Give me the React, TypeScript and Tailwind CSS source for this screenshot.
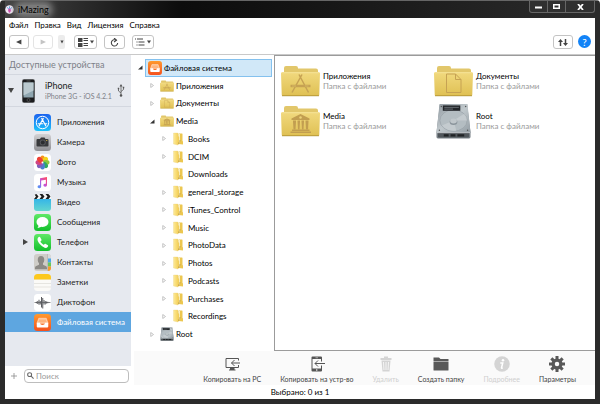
import React, { useState } from 'react';

type IconProps = { className?: string };

interface TreeNode {
  label: string;
  level: number;
  icon: React.FC<IconProps>;
  state: 'open' | 'closed' | 'leaf';
}

// ---- Sidebar icons ----

const AppStoreIcon = ({ className }: IconProps) => (
  <svg viewBox="0 0 34 34" className={className}>
    <defs>
      <linearGradient id="appstore" x1="0" y1="0" x2="0" y2="1">
        <stop offset="0" stopColor="#1c62ee" />
        <stop offset="1" stopColor="#1cc3fb" />
      </linearGradient>
    </defs>
    <rect width="34" height="34" rx="7" fill="url(#appstore)" />
    <circle cx="17" cy="17" r="12.5" fill="none" stroke="#fff" strokeWidth="2" />
    <path d="M18.5 9 10.5 23.5M15.5 9l8 14.5M8.5 19.5h9M21 19.5h4.5" stroke="#fff" strokeWidth="2.4" strokeLinecap="round" />
  </svg>
);

const CameraIcon = ({ className }: IconProps) => (
  <svg viewBox="0 0 34 34" className={className}>
    <defs>
      <linearGradient id="camera" x1="0" y1="0" x2="0" y2="1">
        <stop offset="0" stopColor="#d2d2d4" />
        <stop offset="1" stopColor="#8e8e93" />
      </linearGradient>
    </defs>
    <rect width="34" height="34" rx="7" fill="url(#camera)" />
    <path d="M7 10h5l2-3h7l2 3h4a2 2 0 0 1 2 2v11a2 2 0 0 1-2 2H7a2 2 0 0 1-2-2V12a2 2 0 0 1 2-2z" fill="#37383b" />
    <circle cx="17.5" cy="17" r="6" fill="#55565a" />
    <circle cx="17.5" cy="17" r="4" fill="#2b2c2f" />
    <circle cx="25.5" cy="13" r="1.2" fill="#e8c547" />
  </svg>
);

const PETALS = ['#f7941d', '#f2d21b', '#8fc73e', '#2fa865', '#4a80cf', '#7f5fbb', '#cf4585', '#ee4036'];

const PhotosIcon = ({ className }: IconProps) => (
  <svg viewBox="0 0 34 34" className={className}>
    <rect width="34" height="34" rx="7" fill="#fff" />
    {PETALS.map((color, i) => (
      <ellipse key={color} cx="17" cy="10" rx="4.8" ry="7" fill={color} transform={`rotate(${i * 45} 17 17)`} />
    ))}
    <circle cx="17" cy="17" r="2" fill="#fff" />
  </svg>
);

const MusicIcon = ({ className }: IconProps) => (
  <svg viewBox="0 0 34 34" className={className}>
    <defs>
      <linearGradient id="music" x1="1" y1="0" x2="0" y2="1">
        <stop offset="0.1" stopColor="#fb4c6b" />
        <stop offset="0.5" stopColor="#c452d8" />
        <stop offset="1" stopColor="#3aa0fb" />
      </linearGradient>
    </defs>
    <rect width="34" height="34" rx="7" fill="#fff" />
    <path d="M12 8.500 26 6v16.500a3.600 3 0 1 1-2.300-2.900V11.500L14.300 13v12.500a3.600 3 0 1 1-2.300-2.900z" fill="url(#music)" />
  </svg>
);

const VideoIcon = ({ className }: IconProps) => (
  <svg viewBox="0 0 34 34" className={className}>
    <defs>
      <linearGradient id="video" x1="0" y1="0" x2="0" y2="1">
        <stop offset="0" stopColor="#35b5e8" />
        <stop offset="1" stopColor="#63d6cf" />
      </linearGradient>
      <clipPath id="videoClip">
        <rect width="34" height="34" rx="6" />
      </clipPath>
    </defs>
    <g clipPath="url(#videoClip)">
      <rect width="34" height="10" fill="#f5f5f5" />
      <path d="M0 0h5l4 5-4 5H0l4-5zM11 0h6l4 5-4 5h-6l4-5zM23 0h6l4 5-4 5h-6l4-5z" fill="#1e1e1e" />
      <rect y="10" width="34" height="24" fill="url(#video)" />
    </g>
  </svg>
);

const MessagesIcon = ({ className }: IconProps) => (
  <svg viewBox="0 0 34 34" className={className}>
    <defs>
      <linearGradient id="green" x1="0" y1="0" x2="0" y2="1">
        <stop offset="0" stopColor="#5fe866" />
        <stop offset="1" stopColor="#12c02c" />
      </linearGradient>
    </defs>
    <rect width="34" height="34" rx="7" fill="url(#green)" />
    <ellipse cx="17" cy="16" rx="12" ry="10" fill="#fff" />
    <path d="M9 21c.5 3-.5 5-2.500 6.500 4 .2 7-1 8.500-3z" fill="#fff" />
  </svg>
);

const PhoneIcon = ({ className }: IconProps) => (
  <svg viewBox="0 0 34 34" className={className}>
    <rect width="34" height="34" rx="7" fill="url(#green)" />
    <path
      d="M8 7.500c2-2.500 3.500-2.300 4.600-.5l2.200 3.800c.8 1.500-.3 2.600-1.700 3.700-.6.600 0 1.800 2.200 4.200 2.300 2.300 3.800 3.300 4.500 2.700 1.200-1.300 2.300-2.400 3.700-1.500l3.700 2.300c1.600 1.100 1.800 2.400-.5 4.500-2.700 2.400-7.800.9-13.200-4.500S5.500 10.700 8 7.500z"
      fill="#fff"
    />
  </svg>
);

const ContactsIcon = ({ className }: IconProps) => (
  <svg viewBox="0 0 34 34" className={className}>
    <defs>
      <clipPath id="contactsClip">
        <rect width="34" height="34" rx="6" />
      </clipPath>
    </defs>
    <g clipPath="url(#contactsClip)">
      <rect width="34" height="34" fill="#cfcdc8" />
      <path d="M14 4c4.500 0 6.500 3 6.500 7.500 0 3-1 5.500-2.500 7v3l6.500 3c1.500 1 1.500 3 1.500 6H2c0-3 0-5 1.500-6l6.500-3v-3c-1.500-1.500-2.500-4-2.500-7C7.500 7 9.500 4 14 4z" fill="#8c8a86" />
      <rect x="27" width="1" height="34" fill="#aaa" />
      <rect x="28" width="6" height="10" fill="#d9d9d9" />
      <rect x="28" y="9" width="6" height="8" fill="#4aa8e8" />
      <rect x="28" y="17" width="6" height="8" fill="#67c95a" />
      <rect x="28" y="25" width="6" height="9" fill="#f59a2f" />
    </g>
  </svg>
);

const NotesIcon = ({ className }: IconProps) => (
  <svg viewBox="0 0 34 34" className={className}>
    <path d="M0 11h34v16a7 7 0 0 1-7 7H7a7 7 0 0 1-7-7z" fill="#fbfaf7" />
    <path d="M7 0h20a7 7 0 0 1 7 7v4H0V7a7 7 0 0 1 7-7z" fill="#fcc81e" />
    <path d="M0 19h34M0 26h34" stroke="#d8d6d0" strokeWidth="1.2" />
  </svg>
);

const VoiceIcon = ({ className }: IconProps) => (
  <svg viewBox="0 0 34 34" className={className}>
    <rect width="34" height="34" rx="7" fill="#fff" />
    <path d="M1 17h32" stroke="#66676b" strokeWidth="1.6" />
    <path
      d="M5 15.500v3M7.500 14v6M10 11.500v10M12.500 14v7M15 6v21M17.500 8v21M20 12v9M22.500 14v7M25 15v4M27.500 15.500v3"
      stroke="#5b5c60"
      strokeWidth="2"
    />
  </svg>
);

const FileSystemIcon = ({ className }: IconProps) => (
  <svg viewBox="0 0 34 34" className={className}>
    <defs>
      <linearGradient id="filesystem" x1="0" y1="0" x2="0" y2="1">
        <stop offset="0" stopColor="#ff9a2e" />
        <stop offset="1" stopColor="#f4511e" />
      </linearGradient>
    </defs>
    <rect width="34" height="34" rx="7" fill="url(#filesystem)" />
    <path d="M9.500 8.500h15l3.500 10H6z" fill="#ffc79a" stroke="#ffe3cc" strokeWidth="1.2" />
    <path d="M10 12.500h14M9 15.500h16" stroke="#f9904d" strokeWidth="1" />
    <path d="M5.500 17.500H12c.5 3 2 4.500 5 4.500s4.500-1.500 5-4.500h6.500V25a2 2 0 0 1-2 2h-19a2 2 0 0 1-2-2z" fill="#fff" />
  </svg>
);

// ---- Folder / disk icons ----

const FolderBase = ({ className, children }: IconProps & { children?: React.ReactNode }) => (
  <svg viewBox="0 0 78 62" className={className}>
    <defs>
      <linearGradient id="folder" x1="0" y1="0" x2="0" y2="1">
        <stop offset="0" stopColor="#f1d97e" />
        <stop offset="1" stopColor="#dfc053" />
      </linearGradient>
    </defs>
    <path d="M2 14h4V5a4 4 0 0 1 4-4h20a4 4 0 0 1 4 4v1h36a4 4 0 0 1 4 4v8H2z" fill="#e2c76b" />
    <path d="M0 16a3 3 0 0 1 3-3h72a3 3 0 0 1 3 3l-1.500 43a2 2 0 0 1-2 2h-71a2 2 0 0 1-2-2z" fill="url(#folder)" />
    <path d="M2 14.500h74" stroke="#f6e5a2" strokeWidth="1.5" />
    <path d="M2 60.500h74" stroke="#a88a2e" strokeWidth="1.5" />
    {children}
  </svg>
);

const AppsFolder = ({ className }: IconProps) => (
  <FolderBase className={className}>
    <g fill="none" stroke="#c6a253">
      <path d="M42 18 22 54M36 18l19 36" strokeWidth="3" />
      <path d="M19 41h40" strokeWidth="5" />
    </g>
    <path d="M22 41h8M48 41h7" stroke="#dcc06a" strokeWidth="1.5" />
  </FolderBase>
);

const DocsFolder = ({ className }: IconProps) => (
  <FolderBase className={className}>
    <path d="M25 17h18l11 11v26H25zM43 17v11h11" fill="none" stroke="#c6a253" strokeWidth="2" />
  </FolderBase>
);

const MediaFolder = ({ className }: IconProps) => (
  <FolderBase className={className}>
    <g fill="#c29e50">
      <path d="M39 17 57 26v3H21v-3z" />
      <path d="M24 30h6v2l-1 16h-4l-1-16zM33 30h5v2l-1 16h-3l-1-16zM41 30h5v2l-1 16h-3l-1-16zM49 30h6v2l-1 16h-4l-1-16z" />
      <path d="M22 48h35v3H22zM19 52h41v3H19z" />
    </g>
    <circle cx="39" cy="24" r="2.5" fill="#ecd279" />
  </FolderBase>
);

const PlainFolder = ({ className }: IconProps) => (
  <svg viewBox="0 0 28 28" className={className}>
    <defs>
      <linearGradient id="plain" x1="0" y1="0" x2="1" y2="0">
        <stop offset="0" stopColor="#fdea98" />
        <stop offset="1" stopColor="#f2cb50" />
      </linearGradient>
    </defs>
    <path d="M13 3h7a1 1 0 0 1 1 1v14l1 1v6l-9-1z" fill="#ecc750" />
    <path d="M14 4h2v17h-2z" fill="#fbf0bf" />
    <path d="M3 2h8a1 1 0 0 1 1 1v5l2 2v13l-2 3-9-2z" fill="url(#plain)" stroke="#e8cb72" strokeWidth="0.6" />
    <path d="M13 24c0-4 3-3 3-8" fill="none" stroke="#b3954a" strokeWidth="1.4" />
  </svg>
);

const DiskIcon = ({ className }: IconProps) => (
  <svg viewBox="0 0 72 74" className={className}>
    <defs>
      <linearGradient id="disk" x1="0" y1="0" x2="1" y2="1">
        <stop offset="0" stopColor="#929ba2" />
        <stop offset="0.5" stopColor="#c0c8cc" />
        <stop offset="1" stopColor="#949ea5" />
      </linearGradient>
    </defs>
    <path d="M8 2h56l7 58v10a3 3 0 0 1-3 3H4a3 3 0 0 1-3-3V60z" fill="#777f85" />
    <path d="M9 2h54a2 2 0 0 1 2 2l6 57H1L7 4a2 2 0 0 1 2-2z" fill="url(#disk)" />
    <ellipse cx="36" cy="36" rx="28" ry="22" fill="#b4bdc2" stroke="#9aa3a9" strokeWidth="1.5" />
    <path d="M36 36 12 46a28 22 0 0 0 30 11zM36 36l22-14a28 22 0 0 1 6 14z" fill="#d3d9dc" opacity="0.5" />
    <ellipse cx="36" cy="39" rx="8" ry="6" fill="#8a949b" />
    <ellipse cx="36" cy="37" rx="7" ry="5" fill="#c0c7cb" />
    <rect x="14" y="5" width="36" height="11" fill="#23262a" />
    <path d="M17 9h30M17 12.500h18" stroke="#7e858a" strokeWidth="1.5" />
    <path d="M4 61h64v8a2 2 0 0 1-2 2H6a2 2 0 0 1-2-2z" fill="#50565b" />
    <path d="M16 64h10v5H16zM30 64h10v5H30zM44 64h14v5H44z" fill="#1f2225" />
    <path d="M2 61h68" stroke="#d5dadd" strokeWidth="1.5" />
    <circle cx="11" cy="7" r="1.5" fill="#555" />
    <circle cx="61" cy="7" r="1.5" fill="#555" />
    <circle cx="7" cy="56" r="1.5" fill="#555" />
    <circle cx="65" cy="56" r="1.5" fill="#555" />
  </svg>
);

// ---- Data ----

const MENU = ['Файл', 'Правка', 'Вид', 'Лицензия', 'Справка'];

const SIDEBAR_ITEMS = [
  { label: 'Приложения', icon: AppStoreIcon },
  { label: 'Камера', icon: CameraIcon },
  { label: 'Фото', icon: PhotosIcon },
  { label: 'Музыка', icon: MusicIcon },
  { label: 'Видео', icon: VideoIcon },
  { label: 'Сообщения', icon: MessagesIcon },
  { label: 'Телефон', icon: PhoneIcon, expandable: true },
  { label: 'Контакты', icon: ContactsIcon },
  { label: 'Заметки', icon: NotesIcon },
  { label: 'Диктофон', icon: VoiceIcon },
  { label: 'Файловая система', icon: FileSystemIcon },
];

const TREE: TreeNode[] = [
  { label: 'Файловая система', level: 0, icon: FileSystemIcon, state: 'open' },
  { label: 'Приложения', level: 1, icon: AppsFolder, state: 'closed' },
  { label: 'Документы', level: 1, icon: DocsFolder, state: 'closed' },
  { label: 'Media', level: 1, icon: MediaFolder, state: 'open' },
  { label: 'Books', level: 2, icon: PlainFolder, state: 'closed' },
  { label: 'DCIM', level: 2, icon: PlainFolder, state: 'closed' },
  { label: 'Downloads', level: 2, icon: PlainFolder, state: 'leaf' },
  { label: 'general_storage', level: 2, icon: PlainFolder, state: 'closed' },
  { label: 'iTunes_Control', level: 2, icon: PlainFolder, state: 'closed' },
  { label: 'Music', level: 2, icon: PlainFolder, state: 'closed' },
  { label: 'PhotoData', level: 2, icon: PlainFolder, state: 'closed' },
  { label: 'Photos', level: 2, icon: PlainFolder, state: 'closed' },
  { label: 'Podcasts', level: 2, icon: PlainFolder, state: 'closed' },
  { label: 'Purchases', level: 2, icon: PlainFolder, state: 'closed' },
  { label: 'Recordings', level: 2, icon: PlainFolder, state: 'closed' },
  { label: 'Root', level: 1, icon: DiskIcon, state: 'closed' },
];

const INDENT = ['pl-[2px]', 'pl-[14px]', 'pl-[26px]'];

const FILES = [
  { label: 'Приложения', icon: AppsFolder },
  { label: 'Документы', icon: DocsFolder },
  { label: 'Media', icon: MediaFolder },
  { label: 'Root', icon: DiskIcon },
];

const ACTIONS = [
  {
    label: 'Копировать на PC',
    icon: (
      <g fill="none" stroke="#555" strokeWidth="2">
        <path d="M29 9V5H4v18h25v-5M10 28h13" />
        <path d="M32 14H15M21 8l-6 6 6 6" />
        <path d="M12 26h9" strokeWidth="4" />
      </g>
    ),
  },
  {
    label: 'Копировать на устр-во',
    icon: (
      <g>
        <path d="M7 1h17a2 2 0 0 1 2 2v8h-2V6H7v19h17v-6h2v10a2 2 0 0 1-2 2H7a2 2 0 0 1-2-2V3a2 2 0 0 1 2-2z" fill="#555" />
        <path d="M32 15H12M18 9l-6 6 6 6" fill="none" stroke="#555" strokeWidth="2" />
        <circle cx="15.5" cy="28" r="1.5" fill="#fff" />
        <path d="M13 3.500h5" stroke="#fff" />
      </g>
    ),
  },
  {
    label: 'Удалить',
    disabled: true,
    icon: (
      <g>
        <path d="M12 1h8v3h7v4H5V4h7zM7 9h18l-2 22H9z" fill="#d4d4d4" />
        <path d="m11 12 1 16M16 12v16M21 12l-1 16" stroke="#f6f6f6" strokeWidth="2" />
      </g>
    ),
  },
  {
    label: 'Создать папку',
    icon: <path d="M1 3h11l3 3h16v4H1zM1 11h30v17a1 1 0 0 1-1 1H2a1 1 0 0 1-1-1z" fill="#585858" />,
  },
  {
    label: 'Подробнее',
    disabled: true,
    icon: (
      <g>
        <circle cx="16" cy="16" r="15.5" fill="#d4d4d4" />
        <circle cx="18" cy="8.5" r="2.5" fill="#fff" />
        <path d="M12.500 14h5l-2.500 9.500c-.3 1.200.8 1 2.500 0" fill="none" stroke="#fff" strokeWidth="3" />
      </g>
    ),
  },
  {
    label: 'Параметры',
    icon: (
      <g fill="#585858">
        {[0, 45, 90, 135].map((angle) => (
          <path key={angle} d="M13 0h6v32h-6z" transform={`rotate(${angle} 16 16)`} />
        ))}
        <circle cx="16" cy="16" r="11" />
        <circle cx="16" cy="16" r="4.5" fill="#fafafa" />
      </g>
    ),
  },
];

const toolButton =
  'flex h-[14px] items-center justify-center rounded-[3px] border border-[#c4c4c4] bg-white text-[#444] disabled:border-[#e4e4e4] disabled:text-[#c4c4c4]';

const Twisty = ({ state }: { state: TreeNode['state'] }) => (
  <span className="flex w-[9px] shrink-0 justify-center">
    {state !== 'leaf' && (
      <svg viewBox="0 0 10 10" className="size-[5px]">
        {state === 'open' ? (
          <path d="M9 1v8H0z" fill="#333" />
        ) : (
          <path d="M1.500 1v8L7 5z" fill="#fff" stroke="#b0b0b0" strokeWidth="1.5" />
        )}
      </svg>
    )}
  </span>
);

const TitleBar = () => (
  <header className="flex h-[17px] shrink-0 items-start justify-between">
    <h1 className="flex h-[17px] items-center gap-1 text-[9px] text-black">
      <svg viewBox="0 0 20 20" className="size-[9px]">
        <circle cx="10" cy="10" r="9.5" fill="#f3e9f7" />
        <path d="M10 3v5M5 5l3 4M15 5l-3 4" stroke="#4aa3e0" strokeWidth="2" />
        <path d="M10 8a3 3 0 0 1 3 3c0 3-1.500 6-3 6s-3-3-3-6a3 3 0 0 1 3-3z" fill="#d14fb2" />
      </svg>
      <span className="rounded-full bg-[#7a7a7a] leading-[9px] shadow-[0_0_6px_4px_#7a7a7a]">iMazing</span>
    </h1>
    <div className="flex h-[12px] divide-x divide-[#666] rounded-b-[3px] border border-t-0 border-[#666] bg-[#303030]">
      <button aria-label="Свернуть" className="flex w-[18px] items-center justify-center">
        <svg viewBox="0 0 14 10" className="h-[5px] w-[7px]"><path d="M0 5h14v4H0z" fill="#fff" /></svg>
      </button>
      <button aria-label="Развернуть" className="flex w-[18px] items-center justify-center">
        <svg viewBox="0 0 14 10" className="h-[5px] w-[7px]"><path d="M1.500 1.500h11v7h-11z" fill="none" stroke="#fff" strokeWidth="3" /></svg>
      </button>
      <button aria-label="Закрыть" className="flex w-[28px] items-center justify-center">
        <svg viewBox="0 0 14 12" className="h-[6px] w-[7px]"><path d="m2 0 10 12M12 0 2 12" stroke="#fff" strokeWidth="3.5" /></svg>
      </button>
    </div>
  </header>
);

const Toolbar = () => (
  <div className="flex h-[23px] shrink-0 items-start border-b border-[#c9c9c9] px-1 pt-[3px]">
    <button aria-label="Назад" className={`${toolButton} w-[20px]`}>
      <svg viewBox="0 0 10 10" className="size-[6px]"><path d="M9 1v8L0 5z" fill="currentColor" /></svg>
    </button>
    <button aria-label="Вперёд" disabled className={`${toolButton} ml-1 w-[20px]`}>
      <svg viewBox="0 0 10 10" className="size-[6px]"><path d="M1 1v8l9-4z" fill="currentColor" /></svg>
    </button>
    <button aria-label="История" className="ml-[5px] flex h-[14px] w-[7px] items-center justify-center rounded-[2px] bg-[#ececec] text-[#444]">
      <svg viewBox="0 0 10 10" className="size-[4px]"><path d="M1 1h8L5 9z" fill="currentColor" /></svg>
    </button>
    <button aria-label="Вид" className={`${toolButton} ml-[9px] w-[23px] gap-[2px]`}>
      <svg viewBox="0 0 20 18" className="h-[9px] w-[10px]">
        <path d="M0 0h9v8H0zM0 10h9v8H0zM11 0h9v2h-9zM11 4h9v2h-9zM11 10h9v2h-9zM11 14h9v2h-9z" fill="currentColor" />
      </svg>
      <svg viewBox="0 0 10 10" className="size-[4px]"><path d="M0 1h10L5 9z" fill="currentColor" /></svg>
    </button>
    <button aria-label="Обновить" className={`${toolButton} ml-[7px] w-[21px]`}>
      <svg viewBox="0 0 20 20" className="size-[9px]" fill="none" stroke="currentColor" strokeWidth="2.4">
        <path d="M14 5a7 7 0 1 0 3 6" />
        <path d="M9 0l5.500 5L9 9" />
      </svg>
    </button>
    <button aria-label="Список" className={`${toolButton} ml-[7px] w-[22px] gap-[2px]`}>
      <svg viewBox="0 0 20 16" className="h-[8px] w-[10px]">
        <path d="M0 1h2v2H0zM4 1h12v2H4zM3 7h2v2H3zM7 7h12v2H7zM3 13h2v2H3zM7 13h12v2H7z" fill="currentColor" />
      </svg>
      <svg viewBox="0 0 10 10" className="size-[4px]"><path d="M0 1h10L5 9z" fill="currentColor" /></svg>
    </button>
    <button aria-label="Передачи" className={`${toolButton} ml-auto w-[20px]`}>
      <svg viewBox="0 0 20 14" className="h-[7px] w-[10px]">
        <path d="M5 0 0 6h3.500v8h3V6H10zM15 14l5-6h-3.500V0h-3v8H10z" fill="currentColor" />
      </svg>
    </button>
    <button aria-label="Справка" className="ml-[5px] flex size-[13px] items-center justify-center rounded-full bg-[#1283f7] text-[10px] leading-none text-white">
      ?
    </button>
  </div>
);

export default function App() {
  const [section, setSection] = useState('Файловая система');
  const [node, setNode] = useState('Файловая система');
  const [query, setQuery] = useState('');

  return (
    <div className="flex h-screen flex-col overflow-hidden rounded-t-[4px] border-x-[5px] border-t border-b-[5px] border-[#2b2b2b] border-t-[#666] bg-linear-to-r from-[#454545] via-[#0c0c0c] via-30% to-[#2c2c2c] font-['Lato','Noto_Sans',sans-serif] text-[8px] text-[#222]">
      <TitleBar />

      <div className="flex min-h-0 flex-1 flex-col bg-white">
        <nav className="flex h-[14px] shrink-0 items-center gap-[6px] pl-1 text-black">
          {MENU.map((item) => (
            <button key={item} className="leading-[14px]">{item}</button>
          ))}
        </nav>

        <Toolbar />

        <div className="flex min-h-0 flex-1 gap-[3px]">
          {/* Devices */}
          <aside className="flex w-[126px] shrink-0 flex-col">
            <div className="flex-1 bg-[#e6e9ef]">
              <h2 className="h-[20px] border-b border-[#d3d7df] pl-1 text-[9px] leading-[20px] text-[#7d8087]">Доступные устройства</h2>
              <div className="flex h-[32px] items-center border-b border-[#d3d7df] pl-[3px]">
                <svg viewBox="0 0 12 10" className="h-[5px] w-[6px]"><path d="M0 0h12L6 10z" fill="#444" /></svg>
                <svg viewBox="0 0 26 48" className="ml-[8px] h-[24px] w-[13px]">
                  <rect x="0.5" y="0.5" width="25" height="47" rx="4" fill="#1b1c1e" stroke="#77797c" />
                  <rect x="3" y="7" width="20" height="30" fill="#8fa6b0" />
                  <path d="M3 7h20v16L3 33z" fill="#bac9cf" />
                  <path d="M9 4h8" stroke="#666" strokeWidth="1.5" />
                  <circle cx="13" cy="42" r="3" fill="none" stroke="#777" />
                </svg>
                <div className="ml-[10px] whitespace-nowrap">
                  <div className="text-[9px] leading-[11px]">iPhone</div>
                  <div className="text-[7px] leading-[10px] text-[#7d8087]">iPhone 3G - iOS 4.2.1</div>
                </div>
                <svg viewBox="0 0 16 26" className="mr-[6px] ml-auto h-[13px] w-[8px] shrink-0" fill="none" stroke="#555" strokeWidth="1.6">
                  <path d="M8 4v18M8 18l-5-4v-4M8 15l5-4V8" />
                  <path d="m8 0 3 5H5zM1.500 7.500h3v3h-3zM11.500 5.500h3v3h-3z" fill="#555" stroke="none" />
                  <circle cx="8" cy="23" r="2.5" fill="#555" stroke="none" />
                </svg>
              </div>
              <ul className="pt-[5px]">
                {SIDEBAR_ITEMS.map(({ label, icon: Icon, expandable }) => (
                  <li key={label}>
                    <button
                      onClick={() => setSection(label)}
                      className={`flex h-[20px] w-full items-center pl-[18px] ${section === label ? 'bg-[#5ea6e0] text-white' : ''}`}
                    >
                      <span className="w-[11px] shrink-0">
                        {expandable && <svg viewBox="0 0 10 12" className="h-[6px] w-[5px]"><path d="M0 0v12l10-6z" fill="#444" /></svg>}
                      </span>
                      <Icon className="size-[17px] shrink-0" />
                      <span className="ml-[6px] whitespace-nowrap">{label}</span>
                    </button>
                  </li>
                ))}
              </ul>
            </div>
            <div className="flex h-[19px] shrink-0 items-center pr-[2px] pl-[6px]">
              <button aria-label="Добавить устройство" className="mr-[7px] text-[#8a8a8a]">
                <svg viewBox="0 0 12 12" className="size-[6px]"><path d="M6 0v12M0 6h12" stroke="currentColor" strokeWidth="1.6" /></svg>
              </button>
              <label className="flex h-[14px] min-w-0 flex-1 items-center rounded-[4px] border border-[#bdbdbd] pl-[2px]">
                <svg viewBox="0 0 16 16" className="size-[7px] shrink-0" fill="none" stroke="#666" strokeWidth="2.4">
                  <circle cx="6" cy="6" r="4.5" />
                  <path d="m9.500 9.500 5.500 5.500" />
                </svg>
                <input
                  type="text"
                  aria-label="Поиск"
                  value={query}
                  onChange={(e) => setQuery(e.target.value)}
                  placeholder="Поиск"
                  className="h-full min-w-0 flex-1 pl-[2px] leading-[12px] outline-none placeholder:text-[#9a9a9a]"
                />
              </label>
            </div>
          </aside>

          {/* Browser */}
          <main className="flex min-w-0 flex-1 flex-col">
            <div className="flex min-h-0 flex-1">
              <ul className="flex w-[140px] shrink-0 flex-col pt-1 pr-[2px] pb-[8px]">
                {TREE.map(({ label, level, icon: Icon, state }) => (
                  <li key={label} className={`flex min-h-0 flex-1 items-center ${INDENT[level]}`}>
                    <Twisty state={state} />
                    <button
                      onClick={() => setNode(label)}
                      className={`flex h-full flex-1 items-center gap-[2px] border pl-[2px] text-black ${
                        node === label ? 'border-[#84c1ee] bg-[#d1e8f8]' : 'border-transparent'
                      }`}
                    >
                      <Icon className="size-[14px] shrink-0" />
                      <span>{label}</span>
                    </button>
                  </li>
                ))}
              </ul>
              <section className="grid flex-1 auto-rows-[40px] grid-cols-[repeat(auto-fill,153px)] border-y border-l border-[#9b9b9b] pt-[5px] pl-[6px]">
                {FILES.map(({ label, icon: Icon }) => (
                  <button key={label} className="flex items-center gap-[3px] text-left">
                    <Icon className="h-[36px] w-[39px] shrink-0" />
                    <span className="leading-[10px]">
                      <span className="block text-black">{label}</span>
                      <span className="block text-[#9a9a9a]">Папка с файлами</span>
                    </span>
                  </button>
                ))}
              </section>
            </div>
            <div className="flex h-[34px] shrink-0 justify-end gap-[19px] bg-[#fafafa] pr-[19px]">
              {ACTIONS.map(({ label, icon, disabled }) => (
                <button key={label} disabled={disabled} className="flex flex-col items-center pt-[5px] text-[7px] text-[#444] disabled:text-[#cfcfcf]">
                  <svg viewBox="0 0 32 32" className="size-[16px]">{icon}</svg>
                  <span className="mt-[2px] leading-[10px] whitespace-nowrap">{label}</span>
                </button>
              ))}
            </div>
          </main>
        </div>

        <footer className="h-[14px] shrink-0 text-center leading-[14px] text-black">Выбрано: 0 из 1</footer>
      </div>
    </div>
  );
}
